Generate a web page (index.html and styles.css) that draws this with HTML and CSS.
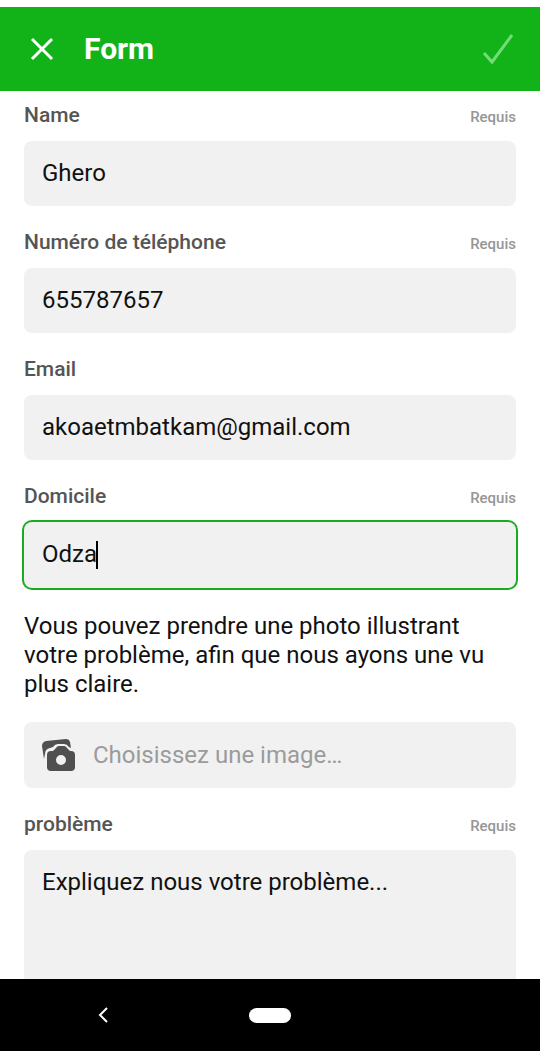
FILE: index.html
```html
<!DOCTYPE html>
<html lang="fr">
<head>
<meta charset="utf-8">
<meta name="viewport" content="width=device-width, initial-scale=1">
<title>Form</title>
<link rel="stylesheet" href="styles.css">
</head>
<body>
<header class="app-bar">
  <button class="icon-button" type="button" aria-label="Fermer">
    <svg width="26" height="26" viewBox="0 0 26 26"><path d="M3 3 23 23M23 3 3 23"/></svg>
  </button>
  <h1 class="title">Form</h1>
  <button class="icon-button confirm" type="submit" form="contact" aria-label="Valider">
    <svg width="32" height="32" viewBox="0 0 32 32"><path d="M2 20 10 29 30 2"/></svg>
  </button>
</header>
<main class="content">
  <form class="form" id="contact">
    <div class="field">
      <div class="label-row"><label for="name">Name</label><span class="required">Requis</span></div>
      <input class="control" id="name" type="text" value="Ghero">
    </div>
    <div class="field">
      <div class="label-row"><label for="phone">Numéro de téléphone</label><span class="required">Requis</span></div>
      <input class="control" id="phone" type="tel" value="655787657">
    </div>
    <div class="field">
      <div class="label-row"><label for="email">Email</label></div>
      <input class="control" id="email" type="email" value="akoaetmbatkam@gmail.com">
    </div>
    <div class="field">
      <div class="label-row"><label for="home">Domicile</label><span class="required">Requis</span></div>
      <div class="active-field">
        <input class="control active" id="home" type="text" value="Odza">
        <span class="caret"></span>
      </div>
    </div>
    <p class="hint">Vous pouvez prendre une photo illustrant votre problème, afin que nous ayons une vu plus claire.</p>
    <button class="control picker" type="button">
      <svg width="34" height="34" viewBox="0 0 34 34">
        <path class="shape" d="M0 8Q0 4 4 3L24 1Q27 1 28 4L29 10 27 9Q25 6 22 6H16Q13 6 11 9L8 10Q3 11 3 16L2 21Z"/>
        <path class="shape" fill-rule="evenodd" d="M9 13H11L14 10Q15 8 17 8H22Q24 8 25 10L28 13H29Q33 13 33 17V29Q33 33 29 33H9Q5 33 5 29V17Q5 13 9 13ZM19 17A5 5 0 1 0 19 27 5 5 0 1 0 19 17Z"/>
      </svg>
      <span>Choisissez une image…</span>
    </button>
    <div class="field grow">
      <div class="label-row"><label for="problem">problème</label><span class="required">Requis</span></div>
      <textarea class="control message" id="problem" rows="3">Expliquez nous votre problème...</textarea>
    </div>
  </form>
</main>
<nav class="system-bar" aria-label="Système">
  <button class="back" type="button" aria-label="Retour">
    <svg width="12" height="16" viewBox="0 0 12 16"><path d="M9 1 2 8 9 15"/></svg>
  </button>
  <button class="home" type="button" aria-label="Accueil"></button>
  <span></span>
</nav>
</body>
</html>
```
FILE: styles.css
```css
* {
  box-sizing: border-box;
}

body {
  margin: 0;
  min-height: 100vh;
  padding-top: 7px;
  display: flex;
  flex-direction: column;
  background: #fff;
  color: #111;
  font-family: Roboto, "Liberation Sans", sans-serif;
  font-size: 24px;
}

button {
  border: 0;
  padding: 0;
  background: none;
  font: inherit;
}

svg {
  display: block;
  fill: none;
  stroke: #fff;
  stroke-width: 3;
}

.app-bar {
  display: flex;
  align-items: center;
  height: 84px;
  padding: 0 26px 0 29px;
  background: #12b318;
  color: #fff;
}

.title {
  flex: 1;
  margin: 0 0 0 29px;
  font-size: 30px;
  line-height: 34px;
  font-weight: 700;
}

.confirm svg {
  stroke: #74dc76;
}

.content,
.form,
.grow {
  flex: 1;
  display: flex;
  flex-direction: column;
}

.form {
  padding: 12px 24px 0;
}

.field {
  margin-bottom: 24px;
}

.grow {
  margin: 24px 0 0;
}

.label-row {
  display: flex;
  justify-content: space-between;
  align-items: baseline;
  height: 24px;
  margin-bottom: 14px;
  line-height: 24px;
  font-size: 21px;
  font-weight: 500;
  color: #555;
}

.required {
  font-size: 15px;
  color: #969696;
}

.control {
  display: block;
  width: 100%;
  height: 65px;
  padding: 0 18px 2px;
  border: 0;
  border-radius: 8px;
  background: #f1f1f1;
  color: #111;
  font: inherit;
  outline: 0;
}

.active-field {
  position: relative;
}

.active {
  box-shadow: 0 0 0 2px #18ac20;
  height: 66px;
}

.caret {
  position: absolute;
  top: 19px;
  left: 72px;
  width: 2px;
  height: 28px;
  background: #000;
}

.hint {
  margin: 0 0 23px;
  line-height: 29px;
}

.picker {
  display: flex;
  align-items: center;
  gap: 17px;
  height: 66px;
  padding-bottom: 0;
  color: #9b9b9b;
}

.shape {
  fill: #505050;
  stroke: none;
}

.message {
  flex: 1;
  padding-top: 18px;
  border-radius: 8px 8px 0 0;
  line-height: 29px;
  resize: none;
}

.system-bar {
  display: grid;
  grid-template-columns: 1fr auto 1fr;
  align-items: center;
  height: 72px;
  background: #000;
}

.back {
  justify-self: center;
  margin-right: 42px;
}

.back svg {
  stroke-width: 2;
}

.home {
  width: 42px;
  height: 15px;
  border-radius: 8px;
  background: #fff;
}
```
